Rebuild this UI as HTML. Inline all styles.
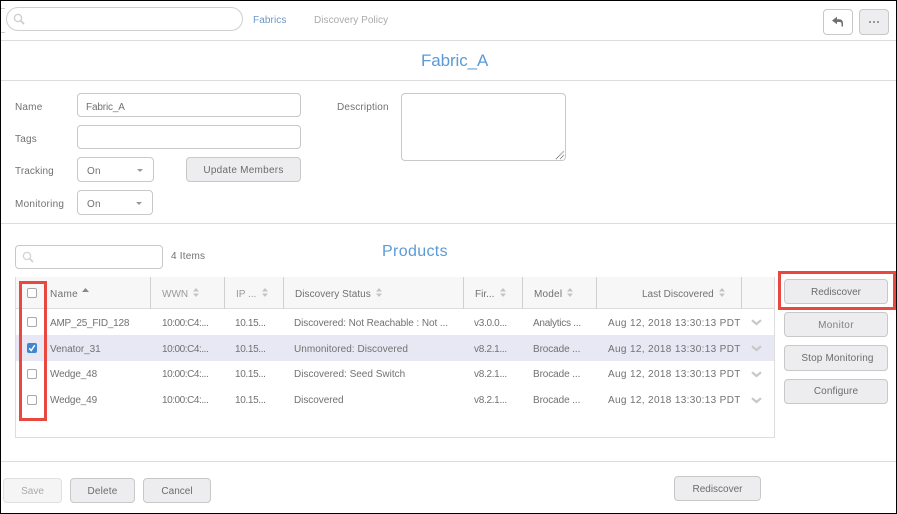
<!DOCTYPE html>
<html><head><meta charset="utf-8">
<style>
html,body{margin:0;padding:0;background:#fff}
#p{position:relative;width:897px;height:514px;overflow:hidden;background:#fff;font-family:"Liberation Sans",sans-serif;font-size:10px;color:#717171;letter-spacing:.2px}
#p div{position:absolute;box-sizing:border-box}
.t{white-space:nowrap;line-height:14px;height:14px;margin-top:2px}
.l{left:1px;right:1px;height:1px;background:#ddd}
.i{border:1px solid #c8c8c8;border-radius:4px;background:#fff}
.b{border:1px solid #c8c8c8;border-radius:4px;background:#ededef;text-align:center;color:#6c6c6c;white-space:nowrap;padding-top:2px}
.c{width:10px;height:10px;border:1px solid #a8a8a8;border-radius:2px;background:#fff}
.v{width:1px;top:277px;height:32px;background:#d0d0d0}
.w{letter-spacing:-.45px}.ip{letter-spacing:-.35px}.f{letter-spacing:-.3px}.m{letter-spacing:-.1px}.d{letter-spacing:.35px}
</style></head><body>
<div id="p">
<div style="left:0;top:0;width:897px;height:1px;background:#000"></div>
<div style="left:0;top:0;width:1px;height:514px;background:#000"></div>
<div style="left:896px;top:0;width:1px;height:514px;background:#000"></div>
<div style="left:0;top:513px;width:897px;height:1px;background:#000"></div>

<div style="left:1px;top:8px;width:4px;height:1px;background:#ccc"></div>
<div style="left:1px;top:32px;width:4px;height:1px;background:#ccc"></div>
<div style="left:6px;top:7px;width:237px;height:24px;border:1px solid #cfcfcf;border-radius:12px;background:#fff"></div>
<svg style="position:absolute;left:13px;top:13px" width="12" height="12" viewBox="0 0 12 12"><circle cx="5" cy="5" r="3.6" fill="none" stroke="#c9cdd2" stroke-width="1.3"/><path d="M7.6 7.6L11 11" stroke="#c9c9c9" stroke-width="1.6"/></svg>
<div class="t" style="left:253px;top:12px;color:#6f97c6;letter-spacing:.1px">Fabrics</div>
<div class="t" style="left:314px;top:12px;color:#aaa;letter-spacing:.05px">Discovery Policy</div>

<div class="i" style="left:823px;top:9px;width:30px;height:26px"></div>
<svg style="position:absolute;left:831px;top:16px" width="14" height="12" viewBox="0 0 14 12"><path d="M1 4.5L6 .8V3.2H8.5C11 3.2 12 5 12 7.5V10.5H10.5V7.8C10.5 6.6 10 6 8.6 6H6V8.2Z" fill="#707070"/></svg>
<div class="b" style="left:859px;top:9px;width:30px;height:26px"></div>
<div style="left:869px;top:21px;width:2px;height:2px;background:#999"></div>
<div style="left:873px;top:21px;width:2px;height:2px;background:#999"></div>
<div style="left:877px;top:21px;width:2px;height:2px;background:#999"></div>

<div class="l" style="top:40px"></div>
<div class="t" style="left:421px;top:48px;height:22px;line-height:22px;font-size:17px;letter-spacing:-.1px;color:#5b9bd5">Fabric_A</div>
<div class="l" style="top:80px"></div>

<div class="t" style="left:15px;top:99px">Name</div>
<div class="i" style="left:77px;top:93px;width:224px;height:24px"></div>
<div class="t" style="left:86px;top:99px;letter-spacing:-.15px">Fabric_A</div>
<div class="t" style="left:15px;top:131px">Tags</div>
<div class="i" style="left:77px;top:125px;width:224px;height:24px"></div>
<div class="t" style="left:15px;top:163px;letter-spacing:.1px">Tracking</div>
<div class="i" style="left:77px;top:157px;width:77px;height:25px"></div>
<div class="t" style="left:87px;top:163px">On</div>
<div style="left:137px;top:169px;width:0;height:0;border-left:3.5px solid transparent;border-right:3.5px solid transparent;border-top:3.5px solid #999"></div>
<div class="b" style="left:186px;top:157px;width:115px;height:25px;line-height:21px;letter-spacing:.25px">Update Members</div>
<div class="t" style="left:15px;top:196px;letter-spacing:.25px">Monitoring</div>
<div class="i" style="left:77px;top:190px;width:76px;height:25px"></div>
<div class="t" style="left:87px;top:196px">On</div>
<div style="left:136px;top:202px;width:0;height:0;border-left:3.5px solid transparent;border-right:3.5px solid transparent;border-top:3.5px solid #999"></div>
<div class="t" style="left:337px;top:99px;letter-spacing:.15px">Description</div>
<div class="i" style="left:401px;top:93px;width:165px;height:68px"></div>
<svg style="position:absolute;left:555px;top:150px" width="10" height="10" viewBox="0 0 10 10"><path d="M1 9L9 1M5 9L9 5" stroke="#666" stroke-width="1" stroke-dasharray="1 .6"/></svg>

<div class="l" style="top:223px"></div>

<div class="i" style="left:15px;top:245px;width:148px;height:24px"></div>
<svg style="position:absolute;left:22px;top:251px" width="12" height="12" viewBox="0 0 12 12"><circle cx="5" cy="5" r="3.6" fill="none" stroke="#d0d3d7" stroke-width="1.3"/><path d="M7.6 7.6L11 11" stroke="#d0d0d0" stroke-width="1.6"/></svg>
<div class="t" style="left:171px;top:248px">4 Items</div>
<div class="t" style="left:382px;top:240px;height:20px;line-height:20px;font-size:16px;letter-spacing:.35px;color:#5b9bd5">Products</div>

<!-- table -->
<div style="left:15px;top:277px;width:760px;height:161px;border:1px solid #ddd;border-top:none"></div>
<div style="left:16px;top:277px;width:758px;height:32px;background:#f7f7f7;border-bottom:1px solid #ddd"></div>
<div style="left:16px;top:335px;width:758px;height:26px;background:#e8e8f4"></div>
<div class="v" style="left:150px"></div>
<div class="v" style="left:224px"></div>
<div class="v" style="left:283px"></div>
<div class="v" style="left:463px"></div>
<div class="v" style="left:522px"></div>
<div class="v" style="left:596px"></div>
<div class="v" style="left:741px"></div>

<div class="t" style="left:50px;top:286px;letter-spacing:.35px">Name</div>
<svg style="position:absolute;left:82px;top:288px" width="7" height="5" viewBox="0 0 7 5"><path d="M0 4L3.5 0L7 4Z" fill="#888"/></svg>
<div class="t" style="left:162px;top:286px;color:#999;letter-spacing:0">WWN</div>
<svg style="position:absolute;left:193px;top:288px" width="6" height="9" viewBox="0 0 6 9"><path d="M0 3.5L3 0L6 3.5ZM0 5.5L3 9L6 5.5Z" fill="#c4c4c4"/></svg>
<div class="t" style="left:236px;top:286px;color:#999;letter-spacing:0">IP ...</div>
<svg style="position:absolute;left:262px;top:288px" width="6" height="9" viewBox="0 0 6 9"><path d="M0 3.5L3 0L6 3.5ZM0 5.5L3 9L6 5.5Z" fill="#c4c4c4"/></svg>
<div class="t" style="left:295px;top:286px;letter-spacing:.05px">Discovery Status</div>
<svg style="position:absolute;left:376px;top:288px" width="6" height="9" viewBox="0 0 6 9"><path d="M0 3.5L3 0L6 3.5ZM0 5.5L3 9L6 5.5Z" fill="#c4c4c4"/></svg>
<div class="t" style="left:475px;top:286px;letter-spacing:0">Fir...</div>
<svg style="position:absolute;left:500px;top:288px" width="6" height="9" viewBox="0 0 6 9"><path d="M0 3.5L3 0L6 3.5ZM0 5.5L3 9L6 5.5Z" fill="#c4c4c4"/></svg>
<div class="t" style="left:534px;top:286px">Model</div>
<svg style="position:absolute;left:567px;top:288px" width="6" height="9" viewBox="0 0 6 9"><path d="M0 3.5L3 0L6 3.5ZM0 5.5L3 9L6 5.5Z" fill="#c4c4c4"/></svg>
<div class="t" style="left:642px;top:286px;letter-spacing:0">Last Discovered</div>
<svg style="position:absolute;left:719px;top:288px" width="6" height="9" viewBox="0 0 6 9"><path d="M0 3.5L3 0L6 3.5ZM0 5.5L3 9L6 5.5Z" fill="#c4c4c4"/></svg>

<!-- checkboxes -->
<div class="c" style="left:27px;top:288px"></div>
<div class="c" style="left:27px;top:317px"></div>
<div style="left:27px;top:343px;width:10px;height:10px;background:#3f86cf;border-radius:2px"></div>
<svg style="position:absolute;left:27px;top:343px" width="10" height="10" viewBox="0 0 10 10"><path d="M2.2 5.2L4.2 7.5L7.8 2.2" fill="none" stroke="#fff" stroke-width="1.5"/></svg>
<div class="c" style="left:27px;top:369px"></div>
<div class="c" style="left:27px;top:395px"></div>

<!-- rows -->
<div class="t" style="left:50px;top:315px;letter-spacing:-.22px">AMP_25_FID_128</div>
<div class="t w" style="left:162px;top:315px">10:00:C4:...</div>
<div class="t ip" style="left:235px;top:315px">10.15...</div>
<div class="t" style="left:294px;top:315px;letter-spacing:-.08px">Discovered: Not Reachable : Not ...</div>
<div class="t f" style="left:474px;top:315px">v3.0.0...</div>
<div class="t" style="left:533px;top:315px;letter-spacing:-.25px">Analytics ...</div>
<div class="t d" style="left:608px;top:315px">Aug 12, 2018 13:30:13 PDT</div>

<div class="t" style="left:50px;top:341px;letter-spacing:-.05px">Venator_31</div>
<div class="t w" style="left:162px;top:341px">10:00:C4:...</div>
<div class="t ip" style="left:235px;top:341px">10.15...</div>
<div class="t" style="left:294px;top:341px;letter-spacing:.05px">Unmonitored: Discovered</div>
<div class="t f" style="left:474px;top:341px">v8.2.1...</div>
<div class="t m" style="left:533px;top:341px">Brocade ...</div>
<div class="t d" style="left:608px;top:341px">Aug 12, 2018 13:30:13 PDT</div>

<div class="t" style="left:50px;top:366px;letter-spacing:-.15px">Wedge_48</div>
<div class="t w" style="left:162px;top:366px">10:00:C4:...</div>
<div class="t ip" style="left:235px;top:366px">10.15...</div>
<div class="t" style="left:294px;top:366px;letter-spacing:0">Discovered: Seed Switch</div>
<div class="t f" style="left:474px;top:366px">v8.2.1...</div>
<div class="t m" style="left:533px;top:366px">Brocade ...</div>
<div class="t d" style="left:608px;top:366px">Aug 12, 2018 13:30:13 PDT</div>

<div class="t" style="left:50px;top:392px;letter-spacing:-.15px">Wedge_49</div>
<div class="t w" style="left:162px;top:392px">10:00:C4:...</div>
<div class="t ip" style="left:235px;top:392px">10.15...</div>
<div class="t" style="left:294px;top:392px;letter-spacing:-.05px">Discovered</div>
<div class="t f" style="left:474px;top:392px">v8.2.1...</div>
<div class="t m" style="left:533px;top:392px">Brocade ...</div>
<div class="t d" style="left:608px;top:392px">Aug 12, 2018 13:30:13 PDT</div>

<svg style="position:absolute;left:751px;top:319px" width="11" height="7" viewBox="0 0 11 7"><path d="M1 1.2L5.5 5L10 1.2" fill="none" stroke="#c8c8c8" stroke-width="2.2"/></svg>
<svg style="position:absolute;left:751px;top:345px" width="11" height="7" viewBox="0 0 11 7"><path d="M1 1.2L5.5 5L10 1.2" fill="none" stroke="#c8c8c8" stroke-width="2.2"/></svg>
<svg style="position:absolute;left:751px;top:371px" width="11" height="7" viewBox="0 0 11 7"><path d="M1 1.2L5.5 5L10 1.2" fill="none" stroke="#c8c8c8" stroke-width="2.2"/></svg>
<svg style="position:absolute;left:751px;top:397px" width="11" height="7" viewBox="0 0 11 7"><path d="M1 1.2L5.5 5L10 1.2" fill="none" stroke="#c8c8c8" stroke-width="2.2"/></svg>

<!-- right buttons -->
<div class="b" style="left:784px;top:279px;width:104px;height:25px;line-height:21px;letter-spacing:0">Rediscover</div>
<div class="b" style="left:784px;top:312px;width:104px;height:25px;line-height:21px;color:#7f7f7f;letter-spacing:.35px">Monitor</div>
<div class="b" style="left:784px;top:345px;width:104px;height:26px;line-height:21px;letter-spacing:.15px;text-indent:3px">Stop Monitoring</div>
<div class="b" style="left:784px;top:379px;width:104px;height:25px;line-height:20px;letter-spacing:.1px">Configure</div>

<!-- red highlights -->
<div style="left:19px;top:281px;width:28px;height:140px;border:3px solid #e8483f"></div>
<div style="left:778px;top:271px;width:118px;height:39px;border:3px solid #e8483f"></div>

<div class="l" style="top:461px"></div>
<div class="b" style="left:3px;top:478px;width:59px;height:25px;line-height:21px;background:#f5f5f5;border-color:#e0e0e0;color:#aaa;letter-spacing:0">Save</div>
<div class="b" style="left:70px;top:478px;width:65px;height:25px;line-height:21px">Delete</div>
<div class="b" style="left:143px;top:478px;width:68px;height:25px;line-height:21px;letter-spacing:0">Cancel</div>
<div class="b" style="left:674px;top:476px;width:87px;height:25px;line-height:21px;letter-spacing:0">Rediscover</div>
</div>
</body></html>
